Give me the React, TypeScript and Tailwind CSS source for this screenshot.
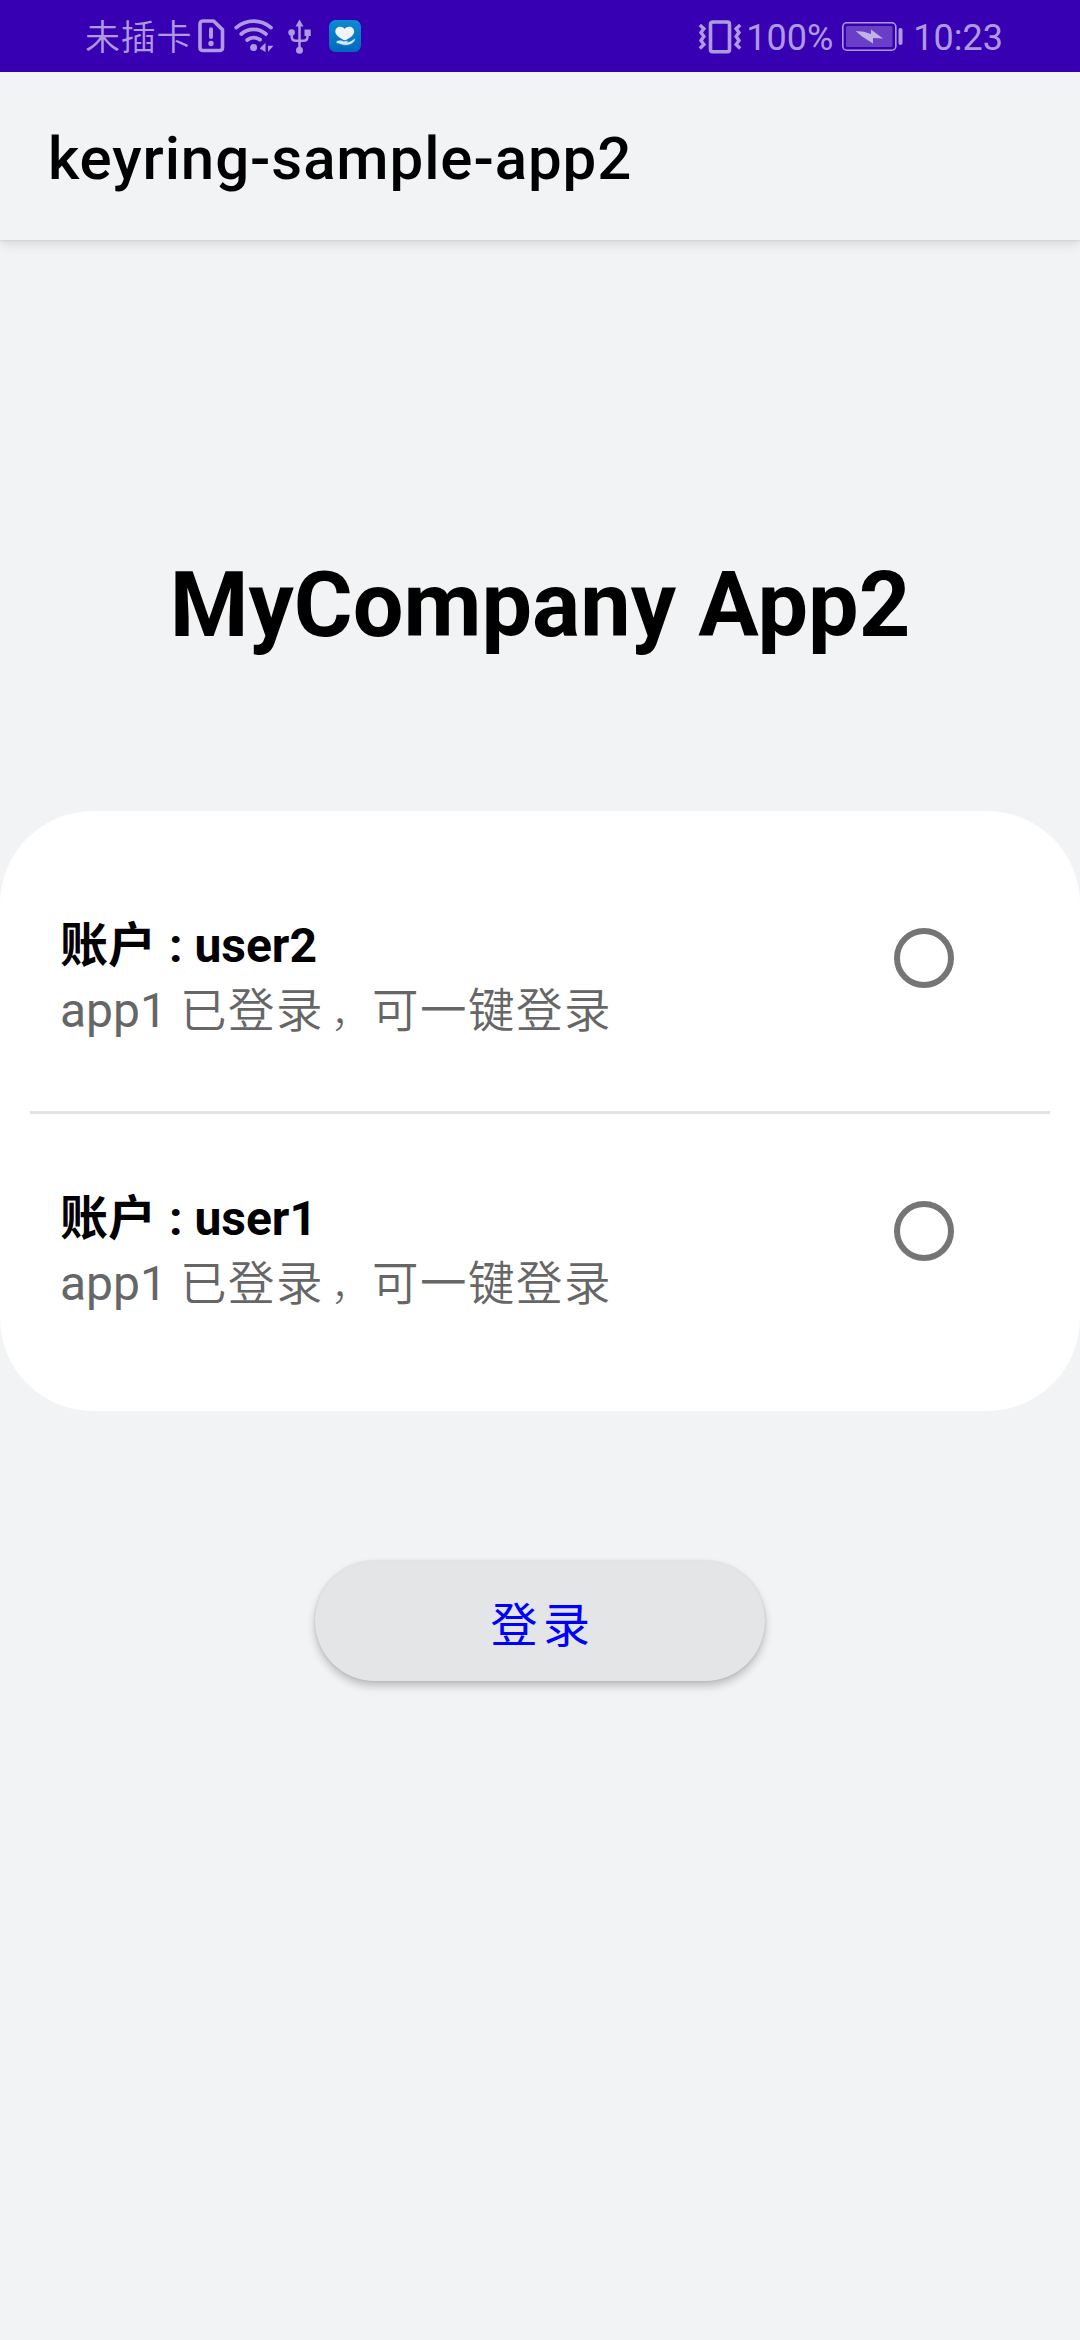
import React from "react";

const accounts = [
  { name: "user2", app: "app1" },
  { name: "user1", app: "app1" },
];

function SimAlertIcon() {
  return (
    <svg className="block h-[34px] w-[27px]" viewBox="0 0 27 34" fill="none">
      <path d="M4.5 2H15.6L24.5 10.6V28.5Q24.5 31.5 21.5 31.5H5Q2 31.5 2 28.5V5Q2 2 5 2Z" stroke="currentColor" strokeWidth="3.6" strokeLinejoin="round" />
      <path d="M13 10.3V18" stroke="currentColor" strokeWidth="4" strokeLinecap="round" />
      <circle cx="13" cy="24.5" r="2.7" fill="currentColor" />
    </svg>
  );
}

function WifiIcon() {
  return (
    <svg className="block h-[36px] w-[40px]" viewBox="0 0 40 36" fill="none">
      <g stroke="currentColor" strokeWidth="3.8" strokeLinecap="round">
        <path d="M2.2 9.6Q10 3.2 19.6 3.2T37 9.6" />
        <path d="M7.3 16Q12.8 11.4 19.6 11.4T31.9 16" />
        <path d="M13.2 22Q16 19.6 19.6 19.6T26 21.6" />
      </g>
      <circle cx="19.6" cy="29.6" r="3.5" fill="currentColor" />
      <path d="M31.5 24.7V34L25.7 30.5ZM34 34V27.7H39.5Z" fill="currentColor" />
    </svg>
  );
}

function UsbIcon() {
  return (
    <svg className="block h-[36px] w-[24px]" viewBox="0 0 24 36" fill="none">
      <path d="M11.5 5V31M3.7 13V17.5Q3.7 21.8 8 21.8H15.5Q19.5 21.8 19.5 17.5V13" stroke="currentColor" strokeWidth="2.5" />
      <path d="M11.5 0.5L15.5 7.5H7.5Z" fill="currentColor" />
      <circle cx="3.6" cy="13.6" r="3.3" fill="currentColor" />
      <path d="M16.5 10.5H22.7V17H16.5Z" fill="currentColor" />
      <circle cx="11.5" cy="31.3" r="3.5" fill="currentColor" />
    </svg>
  );
}

function CareIcon() {
  return (
    <svg className="block h-[32px] w-[32px]" viewBox="0 0 32 32">
      <defs>
        <linearGradient id="care" x1="0" y1="0" x2="0" y2="1">
          <stop offset="0" stopColor="#0c8bd2" />
          <stop offset="1" stopColor="#0069bd" />
        </linearGradient>
      </defs>
      <rect width="32" height="32" rx="6.5" fill="url(#care)" />
      <path d="M15.8 20.5C11.5 18.5 6.3 15.5 6.3 11.5C6.3 6 13 5.3 15.7 8.8C18.4 5.3 25.2 6 25.2 11.5C25.2 15.5 20.5 18.5 15.8 20.5Z" fill="#f1f3f7" />
      <path d="M7 21.5C9.5 19.5 12.5 19.8 14.5 21L18.5 20.5C20 20.5 19.5 21.8 18.5 22L22 20.8L25.8 18.3C27 18.3 26.3 20.3 25.3 21.5C22.5 25 18 26 13.5 25L7 23Z" fill="#d6e7f5" stroke="#0478c6" strokeWidth="0.8" />
    </svg>
  );
}

function VibrateIcon() {
  return (
    <svg className="block h-[34px] w-[44px]" viewBox="0 0 44 34" fill="none" stroke="currentColor">
      <rect x="12.5" y="2" width="19" height="29.8" rx="2.2" strokeWidth="3.6" />
      <path d="M1.8 5L5.9 8.7L3 12.5L5.9 16.5L3 20.5L5.9 24.5L1.8 28.5" strokeWidth="3.4" />
      <path d="M42.2 5L38.1 8.7L41 12.5L38.1 16.5L41 20.5L38.1 24.5L42.2 28.5" strokeWidth="3.4" />
    </svg>
  );
}

function BatteryIcon() {
  return (
    <svg className="block h-[30px] w-[62px]" viewBox="0 0 62 30" fill="none">
      <rect x="0.8" y="0.8" width="53" height="27.4" rx="4" stroke="currentColor" strokeWidth="1.6" />
      <rect x="4" y="4" width="46.5" height="21" rx="1.5" fill="#6a3ec6" />
      <path d="M13.7 9L22 9.8L29 12V7.5L41 16.5L31 16V21.5L20 14.5Z" fill="#c3b2e8" />
      <rect x="56.5" y="6" width="4" height="17" rx="2" fill="currentColor" />
    </svg>
  );
}

function StatusBar() {
  return (
    <div className="flex h-[72px] items-start justify-between bg-[#3700b3] pl-[85px] pr-[77px] text-[36px] leading-[42px] text-[#af99e1]">
      <div className="flex items-start">
        <span className="mt-[18px] w-[108px] whitespace-nowrap text-[35px] font-[350] tracking-[0.8px]">未插卡</span>
        <span className="ml-[5px] mt-[19px]"><SimAlertIcon /></span>
        <span className="ml-[9px] mt-[18px]"><WifiIcon /></span>
        <span className="ml-[14px] mt-[19px]"><UsbIcon /></span>
        <span className="ml-[17px] mt-[20px]"><CareIcon /></span>
      </div>
      <div className="flex items-start">
        <span className="mt-[20px]"><VibrateIcon /></span>
        <span className="ml-[4px] mt-[17px]">100%</span>
        <span className="ml-[9px] mt-[22px]"><BatteryIcon /></span>
        <span className="ml-[9px] mt-[17px]">10:23</span>
      </div>
    </div>
  );
}

export default function App() {
  return (
    <div className="flex h-[2340px] w-[1080px] flex-col bg-[#f1f3f5] font-['Roboto','Noto_Sans_CJK_SC',sans-serif] text-black">
      <StatusBar />
      <header className="flex h-[168px] items-center bg-[#f1f3f5] pl-12 pt-[5px] shadow-[0_3px_12px_rgba(0,0,0,0.12),0_1px_2px_rgba(0,0,0,0.08)]">
        <h1 className="text-[60px] font-medium leading-[70px] tracking-[0.9px]">keyring-sample-app2</h1>
      </header>
      <main className="flex flex-col items-center">
        <h2 className="mt-[313px] text-[90px] font-bold leading-[106px]">MyCompany App2</h2>
        <section className="mt-[152px] h-[600px] w-full rounded-[93px] bg-white px-[30px]">
          {accounts.map((account, i) => (
            <label
              key={account.name}
              className={
                i === 0
                  ? "flex h-[303px] items-start justify-between border-b-[3px] border-[#e3e3e3] pl-[30px] pr-24 pt-[102px]"
                  : "flex h-[297px] items-start justify-between pl-[30px] pr-24 pt-[72px]"
              }
            >
              <div className="text-[48px] leading-[65px]">
                <p className="font-bold">
                  账户<span className="ml-[1px]"> : {account.name}</span>
                </p>
                <p className="text-[#666666]">
                  {account.app}{" "}
                  <span className="ml-[1px] text-[46.5px] font-[350] tracking-[1.5px]">
                    已登录<span className="pl-[7px] text-[40px] font-light tracking-[1px]">，</span>可一键登录
                  </span>
                </p>
              </div>
              <input type="radio" name="account" className="mt-[15px] size-[60px] appearance-none rounded-full border-[6px] border-[#757575]" />
            </label>
          ))}
        </section>
        <button className="mt-[150px] h-[120px] w-[450px] rounded-full bg-[#e4e5e7] pl-[6px] pt-[10px] text-[47px] font-normal tracking-[5.5px] text-[#0000ff] shadow-[0_5px_8px_rgba(0,0,0,0.22),0_0_3px_rgba(0,0,0,0.12)]">
          登录
        </button>
      </main>
    </div>
  );
}
